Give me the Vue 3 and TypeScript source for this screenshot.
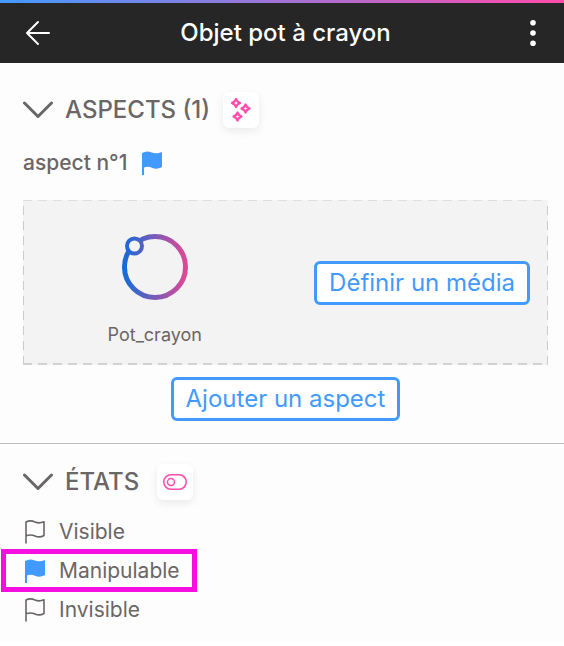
<script setup lang="ts">
import { ref } from 'vue'

const title = 'Objet pot à crayon'
const aspectsOpen = ref(true)
const statesOpen = ref(true)
const states = ['Visible', 'Manipulable', 'Invisible']
const activeState = ref('Manipulable')
</script>

<template>
  <div class="page">
    <header class="topbar">
      <button class="icon-btn" type="button" aria-label="Retour">
        <svg width="26" height="26" viewBox="0 0 26 26" fill="none" stroke="#fff" stroke-width="2" stroke-linecap="round" stroke-linejoin="round">
          <path d="M24 13H2M13 2L2 13L13 24" />
        </svg>
      </button>
      <h1>{{ title }}</h1>
      <button class="icon-btn" type="button" aria-label="Menu">
        <svg width="26" height="26" viewBox="0 0 26 26" fill="#fff">
          <circle cx="13" cy="2.8" r="2.8" />
          <circle cx="13" cy="13" r="2.8" />
          <circle cx="13" cy="23.2" r="2.8" />
        </svg>
      </button>
    </header>

    <main>
      <section class="section">
        <div class="section-head">
          <h2>
            <button class="toggle" type="button" :aria-expanded="aspectsOpen" @click="aspectsOpen = !aspectsOpen">
              <svg class="chevron" width="30" height="18" viewBox="0 0 30 18" fill="none" stroke="currentColor" stroke-width="3" stroke-linecap="round" stroke-linejoin="round">
                <path d="M1.5 2L15 15.5L28.5 2" />
              </svg>
              ASPECTS (1)
            </button>
          </h2>
          <button class="tile" type="button" aria-label="Aspects">
            <svg width="20" height="26" viewBox="0 0 20 26" fill="none" stroke="#ff4baa" stroke-width="2.200" stroke-linejoin="round">
              <path d="M5 2L6.500 4.500L9 6L6.500 7.500L5 10L3.500 7.500L1 6L3.500 4.500Z" />
              <path d="M14.500 7.500L16 10L18.500 11.500L16 13L14.500 15.500L13 13L10.500 11.500L13 10Z" />
              <path d="M6.500 15.500L8 18L10.500 19.500L8 21L6.500 23.500L5 21L2.500 19.500L5 18Z" />
            </svg>
          </button>
        </div>

        <template v-if="aspectsOpen">
          <div class="aspect-name">
            <h3>aspect n°1</h3>
            <svg width="20" height="24" viewBox="0 0 20 24" fill="#429aff">
              <path d="M0 2C3 .5 6 0 9 1.200C13 2.800 16 2.500 20 1V16C16 18.200 13 18 10 16.800C7 15.600 5 15.600 2 16.500V24H0Z" />
            </svg>
          </div>
          <div class="card">
            <figure>
              <svg width="68" height="68" viewBox="0 0 68 68" fill="none">
                <defs>
                  <linearGradient id="ring" gradientUnits="userSpaceOnUse" x1="3" y1="0" x2="65" y2="0">
                    <stop offset="0" stop-color="#176bd8" />
                    <stop offset="1" stop-color="#de4996" />
                  </linearGradient>
                </defs>
                <circle cx="34" cy="34" r="30.500" stroke="url(#ring)" stroke-width="5" />
                <circle cx="13.500" cy="13" r="7.500" fill="#f3f3f3" stroke="url(#ring)" stroke-width="4" />
              </svg>
              <figcaption>Pot_crayon</figcaption>
            </figure>
            <div class="card-action">
              <button class="outline-btn" type="button">Définir un média</button>
            </div>
          </div>
          <button class="outline-btn add" type="button">Ajouter un aspect</button>
        </template>
      </section>

      <section class="section">
        <div class="section-head">
          <h2>
            <button class="toggle" type="button" :aria-expanded="statesOpen" @click="statesOpen = !statesOpen">
              <svg class="chevron" width="30" height="18" viewBox="0 0 30 18" fill="none" stroke="currentColor" stroke-width="3" stroke-linecap="round" stroke-linejoin="round">
                <path d="M1.5 2L15 15.5L28.5 2" />
              </svg>
              ÉTATS
            </button>
          </h2>
          <button class="tile" type="button" aria-label="États">
            <svg width="24" height="16" viewBox="0 0 24 16" fill="none" stroke="#ff4baa" stroke-width="1.500">
              <rect x=".75" y=".75" width="22.500" height="14.500" rx="7.250" />
              <circle cx="8" cy="8" r="3.500" />
            </svg>
          </button>
        </div>

        <ul v-if="statesOpen" class="states">
          <li v-for="state in states" :key="state">
            <button
              class="state"
              :class="{ active: state === activeState }"
              type="button"
              :aria-pressed="state === activeState"
              @click="activeState = state"
            >
              <svg v-if="state === activeState" width="20" height="24" viewBox="0 0 20 24" fill="#429aff">
                <path d="M0 2C3 .5 6 0 9 1.200C13 2.800 16 2.500 20 1V16C16 18.200 13 18 10 16.800C7 15.600 5 15.600 2 16.500V24H0Z" />
              </svg>
              <svg v-else width="20" height="24" viewBox="0 0 20 24" fill="none" stroke="#6b6666" stroke-width="1.600" stroke-linecap="round" stroke-linejoin="round">
                <path d="M1 23V2C4 .5 7 .6 10 2C13 3.300 16 3 19 1.800V15.500C16 17.300 13 17.300 10 16C7 14.700 4 14.800 1 15.800" />
              </svg>
              {{ state }}
            </button>
          </li>
        </ul>
      </section>
    </main>
  </div>
</template>

<style>
body {
  margin: 0;
  background: #fff;
}
</style>

<style scoped>
.page {
  font-family: Inter, "Liberation Sans", sans-serif;
  font-optical-sizing: none;
  color: #6b6666;
  background: #fdfdfd;
}

h1,
h2,
h3,
figure,
ul {
  margin: 0;
  padding: 0;
}

button {
  margin: 0;
  padding: 0;
  border: 0;
  background: none;
  color: inherit;
  font: inherit;
  font-optical-sizing: none;
  cursor: pointer;
}

svg {
  display: block;
  flex: none;
}

.topbar {
  display: flex;
  align-items: center;
  justify-content: space-between;
  height: 60px;
  padding: 3px 18px 0 25px;
  background: linear-gradient(90deg, #429aff, #ff4baa) top / 100% 3px no-repeat #262626;
}

.topbar h1 {
  color: #fff;
  font-size: 24px;
  font-weight: 500;
  line-height: 30px;
}

.section {
  padding: 29px 16px 22px 23px;
}

.section + .section {
  border-top: 1px solid #bdbdbd;
  padding-top: 20px;
  padding-bottom: 13px;
}

.section-head {
  display: flex;
  align-items: center;
  gap: 13px;
  height: 36px;
}

.section + .section .section-head {
  gap: 18px;
}

.toggle {
  display: flex;
  align-items: center;
  gap: 12px;
  font-size: 24px;
  font-weight: 500;
  line-height: 36px;
}

.tile {
  display: grid;
  place-items: center;
  width: 36px;
  height: 36px;
  border-radius: 6px;
  background: #fff;
  box-shadow: 0 3px 9px rgba(0, 0, 0, 0.08);
}

.aspect-name {
  display: flex;
  align-items: center;
  gap: 15px;
  height: 32px;
  margin-top: 19px;
}

.aspect-name h3 {
  font-size: 21px;
  font-weight: 500;
  line-height: 32px;
}

.card {
  display: grid;
  grid-template-columns: 1fr 1fr;
  align-items: center;
  height: 165px;
  margin-top: 21px;
  background:
    repeating-linear-gradient(90deg, #dedede 0 9px, transparent 9px 15px) top / 100% 1px no-repeat,
    repeating-linear-gradient(90deg, #d2d2d2 0 9px, transparent 9px 15px) bottom / 100% 2px no-repeat,
    repeating-linear-gradient(0deg, #cccccc 0 9px, transparent 9px 15px) left / 1px 100% no-repeat,
    repeating-linear-gradient(0deg, #cccccc 0 9px, transparent 9px 15px) right / 1px 100% no-repeat,
    #f3f3f3;
}

figure {
  display: flex;
  flex-direction: column;
  align-items: center;
  gap: 22px;
  padding: 14px 0 0 1px;
}

figcaption {
  font-size: 18px;
  line-height: 24px;
}

.card-action {
  display: flex;
  justify-content: flex-end;
  padding-right: 18px;
}

.outline-btn {
  padding: 4px 12px;
  border: 3px solid #429aff;
  border-radius: 6px;
  background: #fff;
  color: #429aff;
  font-size: 24px;
  line-height: 30px;
}

.add {
  display: block;
  margin: 12px auto 0;
}

.states {
  margin-top: 12px;
  list-style: none;
}

.state {
  position: relative;
  display: flex;
  align-items: center;
  gap: 14px;
  height: 39px;
  padding: 0 17px 0 2px;
  font-size: 21px;
  line-height: 30px;
}

.state.active::after {
  content: "";
  position: absolute;
  inset: -2px 0 -2px -22px;
  border: 5px solid #f50fe0;
}
</style>
